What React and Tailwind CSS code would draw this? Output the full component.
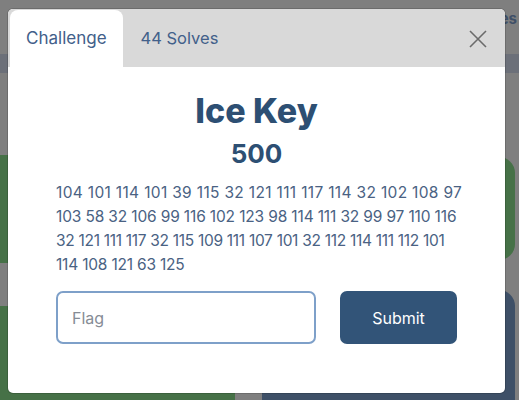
const LINES = [
  { text: '104 101 114 101 39 115 32 121 111 117 114 32 102 108 97', cls: 'tracking-[0.33px]' },
  { text: '103 58 32 106 99 116 102 123 98 114 111 32 99 97 110 116', cls: 'tracking-[-0.15px]' },
  { text: '32 121 111 117 32 115 109 111 107 101 32 112 114 111 112 101', cls: 'tracking-[-0.3px]' },
  { text: '114 108 121 63 125', cls: 'tracking-[-0.2px]' },
];

export default function App() {
  return (
    <div className="relative w-[519px] h-[400px] overflow-hidden bg-[#7f7f7f] font-['Inter','Noto_Sans',sans-serif]">
      {/* Dimmed page behind the modal */}
      <div className="flex flex-col h-full">
        <div className="h-[54px] shrink-0 flex justify-end items-start pt-[8px] pr-[2px]">
          <span className="text-[15px] font-bold text-[#3f5068]">Challenges</span>
        </div>
        <div className="h-[19px] shrink-0 bg-[#6c7079]" />
        <div className="grid grid-cols-[235px_253px] gap-x-[27px] shrink-0">
          <div className="flex flex-col">
            <div className="mt-[82px] h-[108px] bg-[#467147] rounded-r-2xl" />
            <div className="mt-[43px] h-[120px] bg-[#467147] rounded-r-2xl" />
          </div>
          <div className="flex flex-col">
            <div className="mt-[84px] h-[103px] bg-[#467147] rounded-2xl" />
            <div className="mt-[30px] h-[140px] bg-[#3e5067] rounded-2xl" />
          </div>
        </div>
      </div>

      {/* Modal */}
      <div className="absolute left-[8px] top-[9px] w-[497px] h-[384px] bg-white rounded-[5px] shadow-[0_0_0_1px_rgba(0,0,0,0.15)] overflow-hidden flex flex-col">
        <div className="h-[58px] shrink-0 bg-[#d9d9d9] flex items-end pl-[2px] pt-[1px] pr-[18px]">
          <div className="h-[57px] px-4 flex items-center bg-white rounded-t-lg text-[17px] text-[#42608a]">
            Challenge
          </div>
          <div className="h-[57px] px-[18px] flex items-center text-[16.5px] text-[#42608a]">
            44 Solves
          </div>
          <div className="ml-auto h-[57px] flex items-center">
            <svg width="18" height="18" viewBox="0 0 18 18" className="text-[#6b6b6b]">
              <path d="M1 1L17 17M17 1L1 17" stroke="currentColor" strokeWidth="1.6" fill="none" />
            </svg>
          </div>
        </div>

        <div className="flex flex-col px-12 pb-12">
          <h1 className="mt-6 text-center text-[34px] leading-[40px] font-extrabold text-[#2d4f73]">Ice Key</h1>
          <h2 className="mt-[7px] text-center text-[26px] leading-[32px] font-bold text-[#2d4f73]">500</h2>
          <div className="mt-[11px] text-[15.5px] leading-[24px] text-[#4a6283]">
            {LINES.map((l) => (
              <div key={l.text} className={`whitespace-nowrap ${l.cls}`}>{l.text}</div>
            ))}
          </div>
          <div className="mt-[14px] flex gap-6">
            <input
              placeholder="Flag"
              className="w-[260px] h-[53px] border-2 border-[#7ea0c9] rounded-[7px] px-[14px] text-[16px] text-[#495057] placeholder:text-[#868c95] outline-none"
            />
            <button className="w-[118px] h-[53px] bg-[#325478] rounded-[7px] text-white text-[16px] font-normal">
              Submit
            </button>
          </div>
        </div>
      </div>
    </div>
  );
}
